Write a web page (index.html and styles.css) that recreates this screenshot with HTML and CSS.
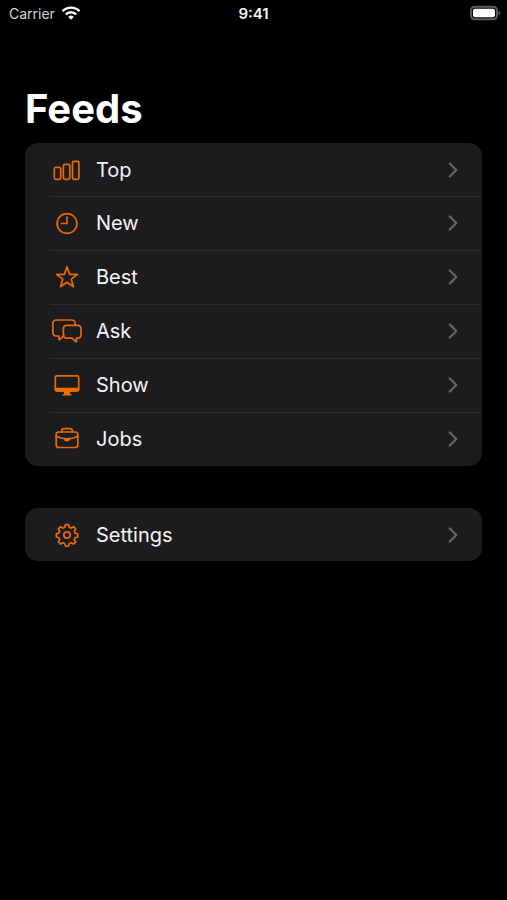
FILE: index.html
```html
<!DOCTYPE html>
<html lang="en">
<head>
<meta charset="utf-8">
<meta name="viewport" content="width=device-width, initial-scale=1">
<title>Feeds</title>
<link rel="stylesheet" href="styles.css">
</head>
<body>
<svg class="sprite" aria-hidden="true">
  <symbol id="chevron" viewBox="0 0 10 16"><path d="M1.800 1.500 8.300 8l-6.500 6.500"/></symbol>
</svg>
<header class="status">
  <div class="status-left">
    <span>Carrier</span>
    <svg class="wifi" viewBox="0 0 20 14" aria-hidden="true">
      <path d="M1.500 5.200a12 12 0 0 1 17 0M4.800 8.500a7.300 7.300 0 0 1 10.400 0"/>
      <path class="dot" d="M7.200 10.900a4 4 0 0 1 5.600 0L10 13.800z"/>
    </svg>
  </div>
  <time class="clock">9:41</time>
  <svg class="battery" viewBox="0 0 29 16" aria-hidden="true">
    <rect class="shell" x="2" y="1.700" width="26" height="12.600" rx="3.800"/>
    <rect class="charge" x="4" y="3.700" width="22" height="8.600" rx="2"/>
    <path class="cap" d="M29.600 5.700c2.200.8 2.200 3.800 0 4.600z"/>
  </svg>
</header>
<main>
  <h1>Feeds</h1>
  <nav class="card" aria-label="Feeds">
    <a class="row" href="#top">
      <svg class="icon" viewBox="0 0 32 32" aria-hidden="true"><rect x="3.300" y="13.300" width="6.400" height="12" rx="1.500"/><rect x="12.400" y="10.300" width="6.400" height="15" rx="1.500"/><rect x="21.500" y="7.300" width="6.400" height="18" rx="1.500"/></svg>
      <span class="label">Top</span><svg class="chevron" aria-hidden="true"><use href="#chevron"/></svg>
    </a>
    <a class="row" href="#new">
      <svg class="icon" viewBox="0 0 32 32" aria-hidden="true"><circle cx="16" cy="16.500" r="9.900"/><path d="M16 10V16.500h-5.200"/></svg>
      <span class="label">New</span><svg class="chevron" aria-hidden="true"><use href="#chevron"/></svg>
    </a>
    <a class="row" href="#best">
      <svg class="icon" viewBox="0 0 32 32" aria-hidden="true"><path d="M16 5.900 18.600 13.400H26.500L20.200 18.100 22.500 25.700 16 21.200 9.500 25.700 11.800 18.100 5.500 13.400H13.400z"/></svg>
      <span class="label">Best</span><svg class="chevron" aria-hidden="true"><use href="#chevron"/></svg>
    </a>
    <a class="row" href="#ask">
      <svg class="icon" viewBox="0 0 32 32" aria-hidden="true"><path d="M12.800 20.700 8.900 24.500q-.9.700-.9-.5v-3H5.600Q1.800 21 1.800 17.200V8.800Q1.800 5 5.600 5h14.800q3.800 0 3.800 3.800v1.500"/><path d="M15.800 10.400h10.800q3.400 0 3.400 3.400v6q0 3.400-3.400 3.400h-1.200V26q0 1.200-.9.500l-3.400-3.300h-5.300q-3.400 0-3.400-3.400v-6q0-3.400 3.400-3.400z"/></svg>
      <span class="label">Ask</span><svg class="chevron" aria-hidden="true"><use href="#chevron"/></svg>
    </a>
    <a class="row" href="#show">
      <svg class="icon" viewBox="0 0 32 32" aria-hidden="true"><rect x="4.300" y="6.800" width="23.400" height="15" rx="1.600"/><path class="solid" d="M3.600 18.800h24.800v1.800q0 2-2 2H5.600q-2 0-2-2zM13 22h6v3h1.400v1.600h-8.800V25H13z"/></svg>
      <span class="label">Show</span><svg class="chevron" aria-hidden="true"><use href="#chevron"/></svg>
    </a>
    <a class="row" href="#jobs">
      <svg class="icon" viewBox="0 0 32 32" aria-hidden="true"><rect x="5.200" y="9" width="21.600" height="15.500" rx="2.500"/><path d="M10.800 9V7.500q0-1.800 1.800-1.800h6.800q1.800 0 1.800 1.800V9M5.200 13.200q10.800 5.200 21.600 0"/><path class="solid" d="M12.800 15h6.400q0 3.600-3.200 3.600T12.800 15z"/></svg>
      <span class="label">Jobs</span><svg class="chevron" aria-hidden="true"><use href="#chevron"/></svg>
    </a>
  </nav>
  <nav class="card" aria-label="Preferences">
    <a class="row" href="#settings">
      <svg class="icon" viewBox="0 0 32 32" aria-hidden="true"><path d="M14.400 5.700h3.200l.7 2.600 1.800.8 2.400-1.400 2.200 2.200-1.400 2.400.8 1.800 2.600.7v3.200l-2.600.7-.8 1.800 1.400 2.400-2.200 2.200-2.400-1.400-1.800.8-.7 2.600h-3.200l-.7-2.600-1.800-.8-2.400 1.400-2.200-2.200 1.400-2.400-.8-1.800-2.600-.7v-3.200l2.600-.7.8-1.800-1.400-2.400 2.200-2.200 2.400 1.400 1.800-.8z"/><circle cx="16" cy="16" r="3.200"/></svg>
      <span class="label">Settings</span><svg class="chevron" aria-hidden="true"><use href="#chevron"/></svg>
    </a>
  </nav>
</main>
</body>
</html>
```
FILE: styles.css
```css
* { box-sizing: border-box; }
body {
  margin: 0;
  min-height: 100vh;
  background: #000;
  color: #f4f4f5;
  font-family: Inter, "Liberation Sans", sans-serif;
}
svg { display: block; flex: none; }
.sprite { display: none; }
.status {
  display: grid;
  grid-template-columns: 1fr auto 1fr;
  align-items: center;
  height: 26px;
  padding: 0 9px;
  font-size: 14px;
}
.status-left { display: flex; align-items: center; gap: 6px; color: #d4d4d4; }
.wifi { width: 20px; height: 14px; fill: none; stroke: #fff; stroke-width: 2.4; }
.wifi .dot { fill: #fff; stroke: none; }
.clock { font-size: 15px; font-weight: 600; }
.battery { width: 29px; height: 16px; justify-self: end; overflow: visible; }
.shell { fill: none; stroke: #5c5c5e; stroke-width: 2; }
.charge { fill: #fff; }
.cap { fill: #5c5c5e; }
main { padding: 58px 25px 0; }
h1 {
  margin: 0 0 9px;
  font-size: 40px;
  line-height: 50px;
  font-weight: 700;
  color: #fff;
}
.card {
  margin-bottom: 42px;
  border-radius: 13px;
  background: #1c1c1e;
  overflow: hidden;
}
.row {
  position: relative;
  display: flex;
  align-items: center;
  height: 53px;
  padding: 0 24px 0 26px;
  color: inherit;
  font-size: 20px;
  text-decoration: none;
}
.row + .row { height: 54px; }
.row + .row::before {
  content: "";
  position: absolute;
  inset: 0 0 auto 25px;
  height: 1px;
  background: #2c2c2e;
}
.icon {
  width: 32px;
  height: 32px;
  margin-right: 13px;
  fill: none;
  stroke: #e8690b;
  stroke-width: 1.7;
  stroke-linecap: round;
  stroke-linejoin: round;
}
.solid { fill: #f06c08; stroke: none; }
.label { flex: 1; }
.chevron {
  width: 10px;
  height: 16px;
  fill: none;
  stroke: #636366;
  stroke-width: 2.4;
  stroke-linecap: round;
  stroke-linejoin: round;
}
```
